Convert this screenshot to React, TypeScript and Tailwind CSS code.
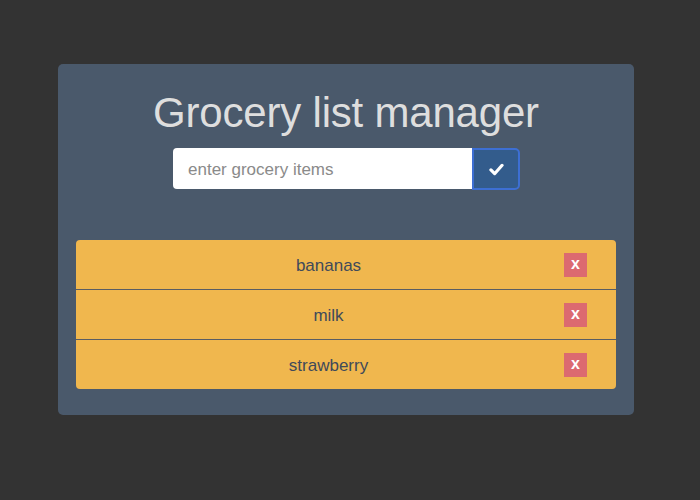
import React from "react";

const items = ["bananas", "milk", "strawberry"];

export default function App() {
  return (
    <div className="w-[700px] h-[500px] bg-[#333333] pt-[64px] pl-[58px]" style={{ fontFamily: '"Liberation Sans", Arial, sans-serif' }}>
      <div className="w-[576px] h-[351px] bg-[#4a596b] rounded-[5px] pt-[22px] px-[18px] flex flex-col">
        <h1 className="text-center text-[42px] leading-[54px] text-[#dedede] font-normal tracking-[-0.2px]">Grocery list manager</h1>
        <div className="flex justify-center mt-[8px] ml-[1px]">
          <div className="w-[299px] h-[41px] bg-white rounded-l-[4px] flex items-center pl-[15px] pt-[3px] text-[17px] text-[#8a8a8a]">
            enter grocery items
          </div>
          <div className="w-[48px] h-[42px] bg-[#335c8c] border-2 border-[#3d6fd3] rounded-r-[5px] flex items-center justify-center">
            <svg width="15" height="13" viewBox="0 0 16 14">
              <path d="M2 7.5 L6 11.5 L14 2.5" fill="none" stroke="white" strokeWidth="3.4" strokeLinecap="round" strokeLinejoin="round" />
            </svg>
          </div>
        </div>
        <div className="mt-[50px] rounded-[4px] overflow-hidden flex flex-col gap-[1px] bg-[#5a5d63]">
          {items.map((it) => (
            <div key={it} className="h-[49px] bg-[#f0b74e] flex items-center pl-[15px] pr-[29px]">
              <div className="flex-1 text-center text-[17px] text-[#3f4a5a] pt-[3px] pl-[2px]">{it}</div>
              <div className="w-[23px] h-[24px] bg-[#dc6a70] text-white font-bold text-[16px] flex items-center justify-center leading-none pb-[1px]">x</div>
            </div>
          ))}
        </div>
      </div>
    </div>
  );
}
